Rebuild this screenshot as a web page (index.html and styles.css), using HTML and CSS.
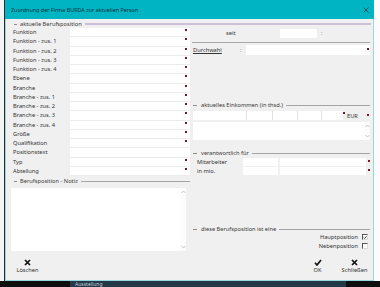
FILE: index.html
```html
<!DOCTYPE html>
<html>
<head>
	<meta charset="utf-8">
	<title>Zuordnung</title>
	<link rel="stylesheet" href="styles.css">
</head>
<body>
	<div class="desk">
		<div class="edge-left"></div>
		<div class="win">
			<div class="titlebar">
				<span class="title">Zuordnung der Firma BURDA zur aktuellen Person</span>
				<svg class="close" width="6" height="6" viewBox="0 0 6 6"><path d="M0.5 0.5L5.5 5.5M5.5 0.5L0.5 5.5" stroke="#1d4f55" stroke-width="0.9"/></svg>
			</div>
			<div class="body">
				<div class="legend top"><span class="dash"></span><span>aktuelle Berufsposition</span><span class="line"></span></div>
				<div class="cols">
					<div class="left">
						<div class="grid">
							<div class="lbl">Funktion</div><div class="fld req"></div>
							<div class="lbl">Funktion - zus. 1</div><div class="fld req"></div>
							<div class="lbl">Funktion - zus. 2</div><div class="fld req"></div>
							<div class="lbl">Funktion - zus. 3</div><div class="fld req"></div>
							<div class="lbl">Funktion - zus. 4</div><div class="fld req"></div>
							<div class="lbl">Ebene</div><div class="fld req"></div>
							<div class="lbl">Branche</div><div class="fld req"></div>
							<div class="lbl">Branche - zus. 1</div><div class="fld req"></div>
							<div class="lbl">Branche - zus. 2</div><div class="fld req"></div>
							<div class="lbl">Branche - zus. 3</div><div class="fld req"></div>
							<div class="lbl">Branche - zus. 4</div><div class="fld req"></div>
							<div class="lbl">Größe</div><div class="fld req"></div>
							<div class="lbl">Qualifikation</div><div class="fld req"></div>
							<div class="lbl">Positionstext</div><div class="fld"></div>
							<div class="lbl">Typ</div><div class="fld req"></div>
							<div class="lbl">Abteilung</div><div class="fld req"></div>
						</div>
						<div class="legend notiz"><span class="dash"></span><span>Berufsposition - Notiz</span><span class="line"></span></div>
						<div class="memo">
							<div class="sbar">
								<svg width="5" height="4" viewBox="0 0 5 4"><path d="M0.5 3L2.5 1L4.5 3" fill="none" stroke="#b5b5b5" stroke-width="0.8"/></svg>
								<svg width="5" height="4" viewBox="0 0 5 4"><path d="M0.5 1L2.5 3L4.5 1" fill="none" stroke="#b5b5b5" stroke-width="0.8"/></svg>
							</div>
						</div>
					</div>
					<div class="right">
						<div class="seit-row">
							<span class="seit-lbl">seit</span>
							<span class="inp seit-inp"></span>
							<span class="colon">:</span>
						</div>
						<div class="sep"></div>
						<div class="dw-row">
							<span class="dw-lbl"><u>Durchwahl</u></span>
							<span class="colon">:</span>
							<span class="inp dw-inp req"></span>
						</div>
						<div class="legend ein"><span class="dash"></span><span>aktuelles Einkommen (in thsd.)</span><span class="line"></span></div>
						<div class="cells">
							<span class="cell c1"></span>
							<span class="cell c2"></span>
							<span class="cell c3"></span>
							<span class="cell c4"></span>
							<span class="cell c5"></span>
							<span class="dot"></span>
							<span class="eur">EUR</span>
							<span class="dot end"></span>
						</div>
						<div class="memo small">
							<div class="sbar">
								<svg width="5" height="4" viewBox="0 0 5 4"><path d="M0.5 3L2.5 1L4.5 3" fill="none" stroke="#b5b5b5" stroke-width="0.8"/></svg>
								<svg width="5" height="4" viewBox="0 0 5 4"><path d="M0.5 1L2.5 3L4.5 1" fill="none" stroke="#b5b5b5" stroke-width="0.8"/></svg>
							</div>
						</div>
						<div class="legend ver"><span class="dash"></span><span>verantwortlich für</span><span class="line"></span></div>
						<div class="rrow">
							<span class="rlbl">Mitarbeiter</span>
							<span class="cell r1"></span>
							<span class="cell r2"></span>
							<span class="dot"></span>
						</div>
						<div class="rrow">
							<span class="rlbl">in mio.</span>
							<span class="cell r1"></span>
							<span class="cell r2"></span>
							<span class="dot"></span>
						</div>
						<div class="legend diese"><span class="dash"></span><span>diese Berufsposition ist eine</span><span class="line"></span></div>
						<div class="chk-row">
							<span>Hauptposition</span>
							<span class="box">
								<svg width="5" height="5" viewBox="0 0 5 5"><path d="M0.6 2.4L2 3.9L4.4 0.8" fill="none" stroke="#111" stroke-width="0.9"/></svg>
							</span>
						</div>
						<div class="chk-row second">
							<span>Nebenposition</span>
							<span class="box"></span>
						</div>
					</div>
				</div>
				<div class="buttons">
					<div class="btn loeschen">
						<svg width="7" height="7" viewBox="0 0 7 7"><path d="M1 1L6 6M6 1L1 6" stroke="#111" stroke-width="1.7"/></svg>
						<span>Löschen</span>
					</div>
					<div class="btn ok">
						<svg width="8" height="7" viewBox="0 0 8 7"><path d="M1 3.8L3 6L7 1" fill="none" stroke="#111" stroke-width="1.7"/></svg>
						<span>OK</span>
					</div>
					<div class="btn schliessen">
						<svg width="7" height="7" viewBox="0 0 7 7"><path d="M1 1L6 6M6 1L1 6" stroke="#111" stroke-width="1.7"/></svg>
						<span>Schließen</span>
					</div>
				</div>
			</div>
		</div>
		<div class="edge-right"></div>
	</div>
	<div class="taskbar"><span class="tab">Ausstellung</span></div>
</body>
</html>
```

FILE: styles.css
```css
* {
	box-sizing: border-box;
}
body {
	margin: 0;
	width: 380px;
	height: 287px;
	overflow: hidden;
	background: #0e0e0e;
	font-family: "Noto Sans", "DejaVu Sans", sans-serif;
	font-size: 5.7px;
	color: #333;
}
.desk {
	display: flex;
	height: 281px;
}
.edge-left {
	width: 5px;
	background: #f4f4f4;
	border-right: 1px solid #2b2b2b;
}
.edge-right {
	width: 6px;
	background: #fbfbfb;
}
.win {
	width: 369px;
	display: flex;
	flex-direction: column;
}
.titlebar {
	height: 19px;
	background: #00b4c4;
	display: flex;
	align-items: center;
	justify-content: space-between;
	padding: 0 5px 0 6px;
}
.title {
	font-size: 5.4px;
	color: #0d3236;
}
.body {
	flex: 1;
	background: #f0f0f0;
	border: 1px solid #95d8de;
	border-top: 0;
	display: flex;
	flex-direction: column;
}

/* group headers */
.legend {
	display: flex;
	align-items: center;
	height: 8px;
	white-space: nowrap;
	color: #3a3a3a;
}
.legend .dash {
	width: 3px;
	height: 1px;
	background: #8c8c8c;
	margin-right: 3px;
}
.legend .line {
	flex: 1;
	height: 1px;
	background: #a4a4a4;
	margin-left: 3px;
}
.legend.top {
	margin: 1px 2px 0 8px;
}
.legend.top .line {
	height: 2px;
	background: #cbc0d8;
}

.cols {
	display: flex;
	height: 225px;
}
.left {
	width: 184px;
}
.right {
	flex: 1;
}

/* left fields */
.grid {
	display: grid;
	grid-template-columns: 57px 120px;
	grid-auto-rows: 9.25px;
	margin-left: 7px;
}
.lbl {
	line-height: 9.25px;
	white-space: nowrap;
}
.fld {
	background: #fff;
	border-bottom: 1px solid #ececec;
	display: flex;
	justify-content: flex-end;
	align-items: flex-start;
	padding: 1px 3px 0 0;
}
.req::after {
	content: "";
	width: 2px;
	height: 2px;
	background: #861225;
}
.legend.notiz {
	margin: 1px 0 0 8px;
}
.memo {
	margin: 3px 0 0 5px;
	width: 175px;
	height: 63px;
	background: #fff;
	display: flex;
	justify-content: flex-end;
}
.sbar {
	width: 6px;
	display: flex;
	flex-direction: column;
	justify-content: space-between;
	align-items: center;
	padding: 2px 0 2px;
	background: #fcfcfc;
}

/* right column */
.seit-row {
	display: flex;
	align-items: center;
	height: 10px;
}
.seit-lbl {
	width: 90px;
	padding-left: 36px;
}
.inp {
	background: #fff;
	height: 9px;
}
.seit-inp {
	width: 37px;
}
.colon {
	color: #8a8a8a;
	margin-left: 4px;
}
.sep {
	height: 1px;
	background: #a9a9a9;
	margin: 4px 3px 0 2px;
}
.dw-row {
	display: flex;
	align-items: center;
	height: 10px;
	margin-top: 2px;
}
.dw-lbl {
	width: 50px;
	padding-left: 3px;
}
.dw-row .colon {
	margin-left: 0;
	width: 6px;
}
.dw-inp {
	flex: 1;
	height: 10px;
	margin-right: 3px;
	display: flex;
	justify-content: flex-end;
	align-items: flex-start;
	padding: 3px 1px 0 0;
}
.legend.ein {
	margin: 46px 3px 0 3px;
}
.legend.ein .dash,
.legend.ver .dash,
.legend.diese .dash {
	width: 4px;
	margin-right: 4px;
}
.cells {
	display: flex;
	height: 9px;
	margin: 2px 0 0 3px;
	align-items: stretch;
}
.cell {
	background: #fff;
	border-right: 1px solid #e2e2e2;
}
.c1 { width: 54px; }
.c2 { width: 26px; }
.c3 { width: 25px; }
.c4 { width: 24px; }
.c5 { width: 21px; border-right: 0; }
.dot {
	width: 2px;
	height: 2px;
	background: #861225;
	align-self: flex-start;
	margin-top: 1px;
}
.eur {
	margin-left: 2px;
	line-height: 9px;
	padding-top: 1px;
}
.dot.end {
	margin: 3px 4px 0 auto;
}
.memo.small {
	margin: 2px 3px 0 3px;
	width: auto;
	height: 18px;
}
.legend.ver {
	margin: 9px 3px 0 3px;
}
.rrow {
	display: flex;
	height: 8px;
	margin: 1px 0 0 7px;
	align-items: stretch;
}
.rrow + .rrow {
	margin-top: 1px;
}
.rlbl {
	width: 46px;
	line-height: 8px;
}
.r1 {
	width: 35px;
	border-right: 0;
}
.r2 {
	width: 86px;
	margin-left: 2px;
	border-right: 0;
}
.rrow .dot {
	margin: 2px 0 0 2px;
}
.legend.diese {
	margin: 50px 3px 0 3px;
}
.chk-row {
	display: flex;
	justify-content: flex-end;
	align-items: center;
	height: 8px;
	padding-right: 5px;
}
.chk-row.second {
	margin-top: 1px;
}
.box {
	width: 6px;
	height: 6px;
	margin-left: 4px;
	background: #fff;
	border-top: 1px solid #555;
	border-left: 1px solid #555;
	border-right: 1px solid #dcdcdc;
	border-bottom: 1px solid #dcdcdc;
	display: flex;
	align-items: center;
	justify-content: center;
}

/* bottom buttons */
.buttons {
	flex: 1;
	display: flex;
	padding: 6px 3.5px 0 6.5px;
}
.btn {
	display: flex;
	flex-direction: column;
	align-items: center;
	width: 30px;
	line-height: 7px;
}
.btn svg {
	margin-bottom: 1px;
}
.btn.ok {
	width: 20px;
	margin-left: auto;
	margin-right: 12px;
}
.taskbar {
	height: 6px;
	display: flex;
}
.tab {
	margin-left: 70px;
	width: 276px;
	background: #253848;
	color: #c3ccd4;
	font-size: 5px;
	padding-left: 5px;
	line-height: 6px;
	overflow: hidden;
}
```
